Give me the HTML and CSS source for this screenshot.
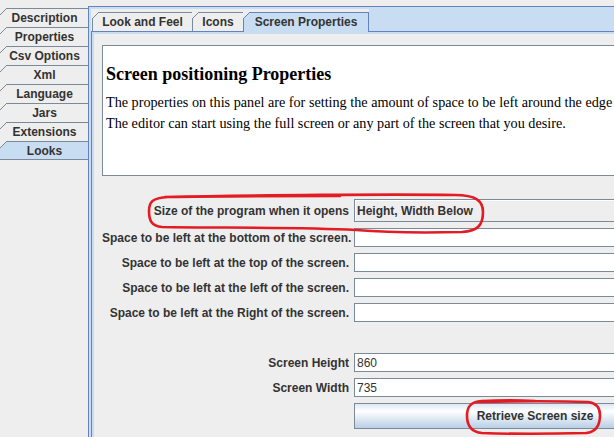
FILE: index.html
```html
<!DOCTYPE html>
<html>
<head>
<meta charset="utf-8">
<title>Screen Properties</title>
<link rel="stylesheet" href="styles.css">
</head>
<body>
<div class="window">
  <div class="side">
    <div class="stab">Description</div>
    <div class="stab">Properties</div>
    <div class="stab">Csv Options</div>
    <div class="stab">Xml</div>
    <div class="stab">Language</div>
    <div class="stab">Jars</div>
    <div class="stab">Extensions</div>
    <div class="stab sel">Looks</div>
  </div>
  <div class="outer">
    <div class="inner">
      <div class="tabrow">
        <div class="ttab w-lf">Look and Feel</div>
        <div class="ttab w-ic">Icons</div>
        <div class="ttab w-sp sel">Screen Properties</div>
        <div class="tabfill"></div>
      </div>
      <div class="content">
        <div class="pane">
          <div class="html">
            <h3>Screen positioning Properties</h3>
            <p>The properties on this panel are for setting the amount of space to be left around the edge<br>The editor can start using the full screen or any part of the screen that you desire.</p>
          </div>
          <div class="form">
            <div class="row first">
              <div class="lbl">Size of the program when it opens</div>
              <div class="fld combo">Height, Width Below</div>
            </div>
            <div class="row">
              <div class="lbl">Space to be left at the bottom of the screen.</div>
              <div class="fld"></div>
            </div>
            <div class="row">
              <div class="lbl">Space to be left at the top of the screen.</div>
              <div class="fld"></div>
            </div>
            <div class="row">
              <div class="lbl">Space to be left at the left of the screen.</div>
              <div class="fld"></div>
            </div>
            <div class="row">
              <div class="lbl">Space to be left at the Right of the screen.</div>
              <div class="fld"></div>
            </div>
            <div class="row gap">
              <div class="lbl">Screen Height</div>
              <div class="fld">860</div>
            </div>
            <div class="row">
              <div class="lbl">Screen Width</div>
              <div class="fld">735</div>
            </div>
            <div class="row">
              <div class="lbl"></div>
              <div class="btn">Retrieve Screen size</div>
            </div>
          </div>
        </div>
      </div>
    </div>
  </div>
</div>
<svg class="marks" width="614" height="437" viewBox="0 0 614 437">
  <path d="M 165 197 C 250 195, 400 194, 455 195 C 476 195, 483 201, 483 212 C 483 225, 478 231, 462 232 C 420 233, 380 232, 356 230 C 300 227, 220 228, 162 227 C 151 226, 149 220, 149 211 C 149 202, 152 198, 168 197 C 220 196, 300 196, 340 196" />
  <path d="M 478 402 C 520 401, 560 401, 588 402 C 597 403, 600 408, 600 415 C 600 426, 596 432, 586 433 C 550 434, 510 434, 482 433 C 471 432, 467 426, 467 416 C 467 407, 470 402, 482 401 C 500 400, 520 400, 535 401" />
</svg>
</body>
</html>
```

FILE: styles.css
```css
html, body {
  margin: 0;
  padding: 0;
}

body {
  background: #eeeeee;
  overflow: hidden;
  width: 614px;
  height: 437px;
  position: relative;
  font-family: "Liberation Sans", Arial, sans-serif;
  font-size: 12px;
  font-weight: bold;
  color: #333333;
}

.window {
  display: flex;
  width: 760px;
  height: 437px;
}

/* ---------- left (vertical) tabs ---------- */
.side {
  width: 88px;
  flex: none;
  padding-top: 8px;
}

.stab {
  position: relative;
  height: 19px;
  box-sizing: border-box;
  border-top: 1px solid #7a8a99;
  display: flex;
  align-items: center;
  justify-content: center;
  padding-left: 1px;
}

.stab::before {
  content: "";
  position: absolute;
  left: 0;
  top: -1px;
  width: 7px;
  height: 7px;
  background: linear-gradient(to bottom right,
    #eeeeee 0, #eeeeee calc(50% - 0.6px),
    #7a8a99 calc(50% - 0.6px), #7a8a99 calc(50% + 0.6px),
    transparent calc(50% + 0.6px));
}

.stab.sel {
  background: #c8ddf2;
  border-bottom: 1px solid #7a8a99;
}

/* ---------- outer content ---------- */
.outer {
  flex: 1;
  margin-top: 6px;
  border-top: 1px solid #6382bf;
  border-left: 1px solid #6382bf;
  background: #c8ddf2;
  padding: 2px 0 0 2px;
  display: flex;
}

.inner {
  flex: 1;
  display: flex;
  flex-direction: column;
}

/* ---------- top tabs ---------- */
.tabrow {
  height: 22px;
  flex: none;
  display: flex;
  align-items: flex-end;
  background: #eeeeee;
  padding-left: 1px;
}

.ttab {
  position: relative;
  height: 19px;
  box-sizing: border-box;
  border-top: 1px solid #7a8a99;
  border-left: 1px solid #7a8a99;
  background: #eeeeee;
  display: flex;
  align-items: center;
  justify-content: center;
  flex: none;
}

.ttab::before {
  content: "";
  position: absolute;
  left: -1px;
  top: -1px;
  width: 7px;
  height: 7px;
  background: linear-gradient(to bottom right,
    #eeeeee 0, #eeeeee calc(50% - 0.6px),
    #7a8a99 calc(50% - 0.6px), #7a8a99 calc(50% + 0.6px),
    transparent calc(50% + 0.6px));
}

.w-lf { width: 100px; }
.w-ic { width: 51px; }
.w-sp { width: 126px; }

.ttab.sel {
  background: #c8ddf2;
  border-color: #6382bf;
  border-right: 1px solid #6382bf;
  height: 20px;
  margin-bottom: -1px;
  z-index: 1;
  padding-bottom: 1px;
}

.ttab.sel::before {
  background: linear-gradient(to bottom right,
    #eeeeee 0, #eeeeee calc(50% - 0.6px),
    #6382bf calc(50% - 0.6px), #6382bf calc(50% + 0.6px),
    transparent calc(50% + 0.6px));
}

.tabfill {
  flex: 1;
  align-self: stretch;
  background: #c8ddf2;
}

/* ---------- inner content ---------- */
.content {
  flex: 1;
  border-top: 1px solid #6382bf;
  border-left: 1px solid #6382bf;
  background: #c8ddf2;
  padding: 2px 0 0 2px;
  display: flex;
}

.pane {
  flex: 1;
  background: #eeeeee;
  padding: 11px 0 0 8px;
}

.html {
  width: 640px;
  height: 131px;
  box-sizing: border-box;
  border: 1px solid #7a8a99;
  background: #ffffff;
  padding-left: 3px;
  font-family: "Liberation Serif", "Times New Roman", serif;
  font-weight: normal;
  color: #000000;
}

.html h3 {
  margin: 17px 0 0;
  font-size: 18px;
  line-height: 22px;
  font-weight: bold;
}

.html p {
  margin: 7px 0 0;
  font-size: 14.2px;
  line-height: 21px;
  white-space: nowrap;
}

/* ---------- form ---------- */
.form {
  display: flex;
  flex-direction: column;
}

.row {
  display: flex;
  align-items: center;
  gap: 5px;
  margin-top: 6px;
}

.row.first { margin-top: 23px; }
.row.gap { margin-top: 31px; }

.lbl {
  width: 247px;
  flex: none;
  text-align: right;
  white-space: nowrap;
}

.fld {
  width: 362px;
  height: 19px;
  flex: none;
  box-sizing: border-box;
  border: 1px solid #7a8a99;
  background: #ffffff;
  font-weight: normal;
  padding-left: 2px;
  display: flex;
  align-items: center;
}

.fld.combo {
  height: 23px;
  background: #eeeeee;
  font-weight: bold;
  box-shadow: inset 1px 1px 0 #ffffff;
}

.btn {
  width: 362px;
  height: 26px;
  flex: none;
  box-sizing: border-box;
  border: 1px solid #7a8a99;
  background: linear-gradient(#dde8f3 0%, #ffffff 30%, #b8cfe5 100%);
  display: flex;
  align-items: center;
  justify-content: center;
}

/* ---------- red annotation marks ---------- */
.marks {
  position: absolute;
  left: 0;
  top: 0;
  pointer-events: none;
}

.marks path {
  fill: none;
  stroke: #e31b23;
  stroke-width: 2.6;
  stroke-linecap: round;
}
```
